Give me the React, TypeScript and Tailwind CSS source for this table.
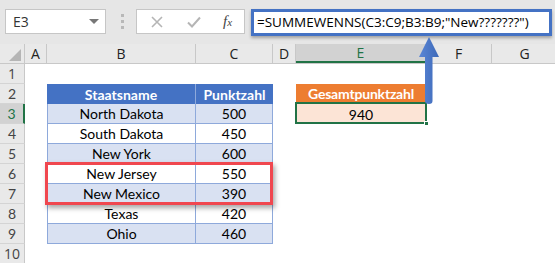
import React from 'react';

const cols = [
  { key: 'A', w: 'w-[22px]' },
  { key: 'B', w: 'w-[149px]' },
  { key: 'C', w: 'w-[77px]' },
  { key: 'D', w: 'w-[23px]' },
  { key: 'E', w: 'w-[130px]' },
  { key: 'F', w: 'w-[66px]' },
  { key: 'G', w: 'w-[66px]' },
];

const states = [
  { name: 'North Dakota', score: 500 },
  { name: 'South Dakota', score: 450 },
  { name: 'New York', score: 600 },
  { name: 'New Jersey', score: 550 },
  { name: 'New Mexico', score: 390 },
  { name: 'Texas', score: 420 },
  { name: 'Ohio', score: 460 },
];

const cellFont = "font-['Lato','Liberation_Sans',sans-serif] text-[14px]";

const RowHeader = ({ n, active }: { n: number; active?: boolean }) => (
  <div
    className={
      'w-[25px] shrink-0 h-full flex items-center justify-center text-[14px] border-b border-[#d4d4d4] ' +
      (active
        ? 'bg-[#d2d2d2] text-[#217346] border-r-2 border-r-[#217346]'
        : 'bg-[#e9e9e9] text-[#444] border-r border-r-[#c8c8c8]')
    }
  >
    {n}
  </div>
);

export default function App() {
  return (
    <div className="relative w-[555px] h-[263px] overflow-hidden bg-white font-['Open_Sans','Noto_Sans',sans-serif] text-[#222]">
      {/* formula bar */}
      <div className="h-[44px] bg-[#e6e6e6] flex items-start pt-[9px]">
        <div className="ml-[5px] w-[101px] h-[25px] bg-white border border-[#c6c6c6] flex items-center pl-[7px] pr-[6px] text-[14px] text-[#333]">
          <span className="flex-1">E3</span>
          <span className="w-0 h-0 border-l-[5px] border-r-[5px] border-t-[5px] border-l-transparent border-r-transparent border-t-[#777]" />
        </div>
        <div className="ml-[15px] w-[3px] h-[25px] flex flex-col items-center justify-center gap-[3px]">
          <span className="w-[3px] h-[3px] bg-[#b8b8b8]" />
          <span className="w-[3px] h-[3px] bg-[#b8b8b8]" />
          <span className="w-[3px] h-[3px] bg-[#b8b8b8]" />
        </div>
        <div className="ml-[12px] w-[109px] h-[25px] bg-white border border-[#c6c6c6] flex items-center">
          <svg className="ml-[14px]" width="12" height="12" viewBox="0 0 12 12">
            <path d="M1 1L11 11M11 1L1 11" stroke="#b5b5b5" strokeWidth="1.6" />
          </svg>
          <svg className="ml-[24px]" width="14" height="12" viewBox="0 0 14 12">
            <path d="M1 6.5L5 10.5L13 1.5" stroke="#b5b5b5" strokeWidth="2" fill="none" />
          </svg>
          <span className="ml-[22px] font-['Liberation_Serif',serif] italic text-[15px] text-[#444] leading-none">
            f<span className="text-[11px]">x</span>
          </span>
        </div>
        <div className="ml-[6px] w-[301px] h-[27px] bg-white border-[3px] border-[#4472c4] shadow-[0_2px_3px_rgba(0,0,0,0.3)] flex items-center pl-[3px] text-[13.5px] text-black whitespace-nowrap">
          =SUMMEWENNS(C3:C9;B3:B9;"New???????")
        </div>
      </div>

      {/* column headers */}
      <div className="h-[20px] flex bg-[#e9e9e9] border-b border-[#c8c8c8] text-[14px] text-[#222]">
        <div className="w-[25px] shrink-0 h-full border-r border-[#c8c8c8] flex items-end justify-end pr-[3px] pb-[2px]">
          <svg width="12" height="12" viewBox="0 0 12 12">
            <path d="M12 0V12H0Z" fill="#b5b5b5" />
          </svg>
        </div>
        {cols.map((c) => (
          <div
            key={c.key}
            className={
              c.w +
              ' shrink-0 h-full flex items-center justify-center border-r border-[#c8c8c8] ' +
              (c.key === 'E' ? 'bg-[#d2d2d2] text-[#217346] border-b-2 border-b-[#217346]' : '')
            }
          >
            {c.key}
          </div>
        ))}
      </div>

      {/* row 1 */}
      <div className="h-[20px] flex">
        <RowHeader n={1} />
      </div>

      {/* row 2: headings */}
      <div className={'h-[20px] flex ' + cellFont}>
        <RowHeader n={2} />
        <div className="w-[22px] shrink-0" />
        <div className="w-[149px] shrink-0 bg-[#4472c4] text-white font-bold flex items-center justify-center border-r border-[#8ea9db]">
          Staatsname
        </div>
        <div className="w-[77px] shrink-0 bg-[#4472c4] text-white font-bold flex items-center justify-center">
          Punktzahl
        </div>
        <div className="w-[23px] shrink-0" />
        <div className="w-[130px] shrink-0 h-[18px] bg-[#ed7d31] text-white font-bold flex items-center justify-center tracking-[-0.2px]">
          Gesamtpunktzahl
        </div>
      </div>

      {/* rows 3-9: data */}
      {states.map((s, i) => (
        <div key={s.name} className={'h-[20px] flex ' + cellFont}>
          <RowHeader n={i + 3} active={i === 0} />
          <div className="w-[22px] shrink-0" />
          <div
            className={
              'w-[149px] shrink-0 flex items-center justify-center border-l border-r border-b border-[#8ea9db] text-black ' +
              (i % 2 === 0 ? 'bg-[#d9e1f2]' : 'bg-white')
            }
          >
            {s.name}
          </div>
          <div
            className={
              'w-[77px] shrink-0 flex items-center justify-center border-r border-b border-[#8ea9db] text-black ' +
              (i % 2 === 0 ? 'bg-[#d9e1f2]' : 'bg-white')
            }
          >
            {s.score}
          </div>
          <div className="w-[23px] shrink-0" />
          {i === 0 && (
            <div className="relative w-[130px] shrink-0 bg-[#fce4d6] flex items-center justify-center text-black">
              940
              <div className="absolute -top-[2px] -left-[1px] -right-[1px] bottom-0 border-2 border-[#217346]" />
              <div className="absolute -right-[3px] -bottom-[2px] w-[5px] h-[5px] bg-[#217346] border border-white" />
            </div>
          )}
        </div>
      ))}

      {/* row 10 */}
      <div className="h-[20px] flex">
        <RowHeader n={10} />
      </div>

      {/* highlight around New Jersey / New Mexico */}
      <div className="absolute left-[45px] top-[162px] w-[228px] h-[43px] border-[3px] border-[#f0474f] shadow-[2px_3px_5px_rgba(0,0,0,0.35)]" />

      {/* arrow to the formula */}
      <svg className="absolute left-[417px] top-[36px]" width="26" height="70" viewBox="0 0 26 70">
        <defs>
          <linearGradient id="shaft" x1="0" x2="1" y1="0" y2="0">
            <stop offset="0" stopColor="#5a86d6" />
            <stop offset="1" stopColor="#3d69b8" />
          </linearGradient>
        </defs>
        <path
          d="M12 1L22 21H15.5V65Q15.5 68 12 68Q8 68 8 65V21H2Z"
          fill="url(#shaft)"
        />
      </svg>
    </div>
  );
}
